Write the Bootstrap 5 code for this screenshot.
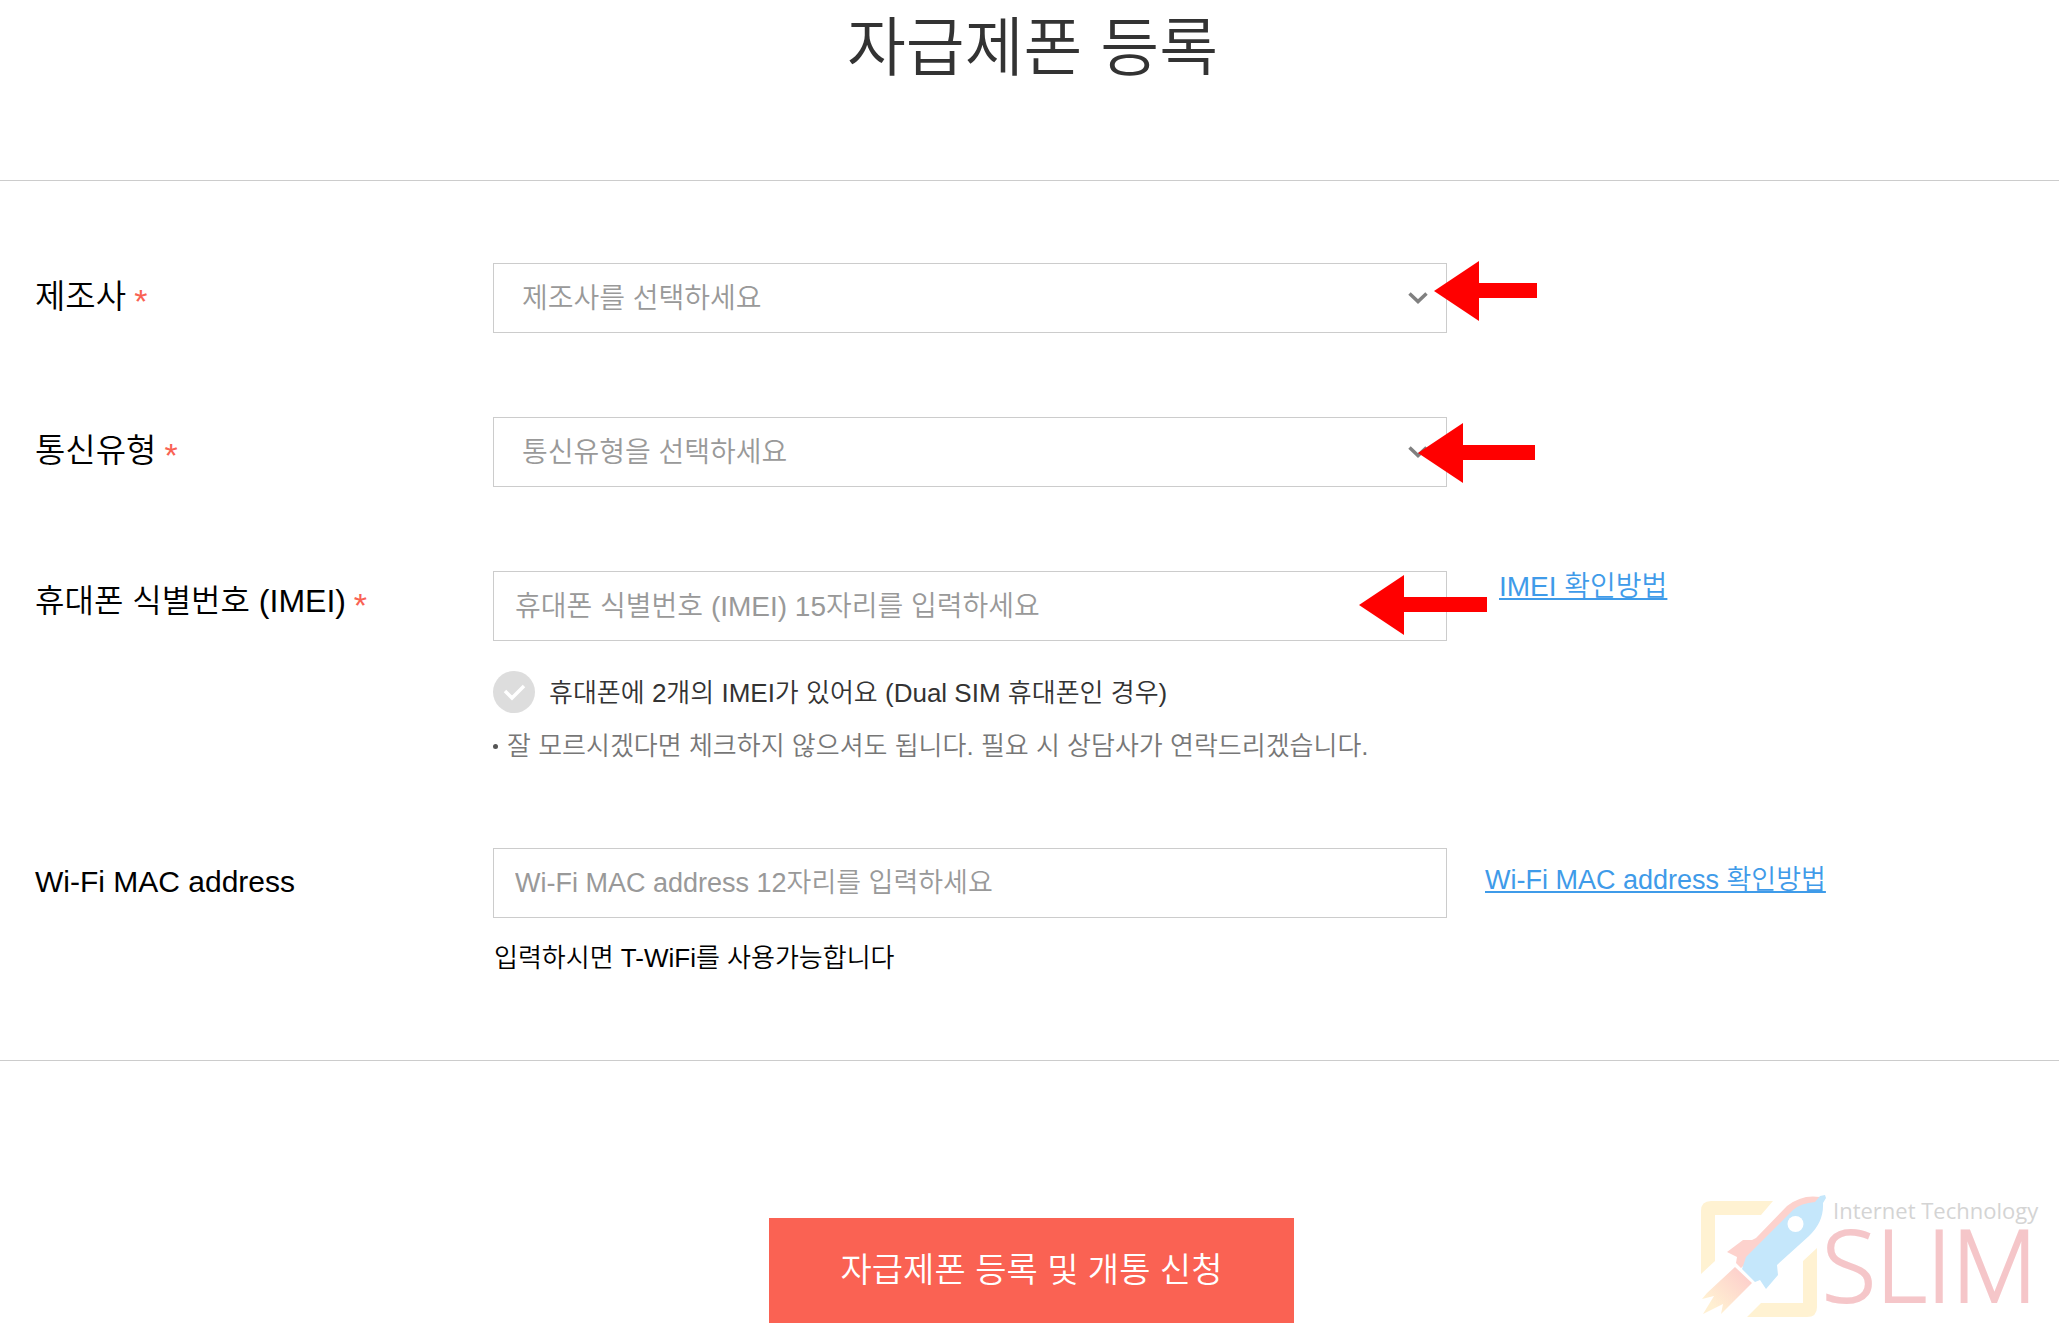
<!DOCTYPE html>
<html lang="ko">
<head>
<meta charset="utf-8">
<meta name="viewport" content="width=device-width, initial-scale=1">
<title>자급제폰 등록</title>
<link href="https://cdn.jsdelivr.net/npm/bootstrap@5.3.0/dist/css/bootstrap.min.css" rel="stylesheet">
<style>
  body { font-family: "Liberation Sans", "Noto Sans CJK KR", sans-serif; font-weight: 350; color: #000; background: #fff; }
  .page-title { font-size: 64px; line-height: 72px; font-weight: 350; color: #333; padding: 6px 0 102px 6px; font-family: "Noto Sans CJK KR", sans-serif; }
  .reg-form { border-top: 1px solid #ccc; border-bottom: 1px solid #ccc; padding: 82px 0 82px 35px; }
  .form-line { display: grid; grid-template-columns: 458fr 954fr 612fr; }
  .form-line + .form-line { margin-top: 84px; }
  .line-label { font-size: 33px; line-height: 68px; }
  .line-label.latin { font-size: 30px; }
  .line-label.lifted { font-size: 32px; line-height: 60px; }
  .req { color: #f96253; font-size: 34px; line-height: 34px; vertical-align: -5px; margin-left: -1px; }
  .reg-form .field { height: 70px; border: 1px solid #ccc; border-radius: 0; color: #999; font-size: 28px; font-weight: 350; line-height: 40px; padding: 2px 20px 0 21px; background-color: #fff; }
  .reg-form select.field { padding: 2px 60px 0 28px; background-image: url("data:image/svg+xml,%3Csvg xmlns='http://www.w3.org/2000/svg' viewBox='0 0 20 12'%3E%3Cpath d='M1.5 1.5 10 9.5l8.500-8' fill='none' stroke='%23808080' stroke-width='3.500'/%3E%3C/svg%3E"); background-size: 20px 12px; background-position: right 18px center; }
  .field::placeholder { color: #999; opacity: 1; }
  .reg-form .field.mac { font-size: 27px; padding-top: 0; }
  .pointer { position: absolute; height: 60px; fill: #f00; pointer-events: none; }
  .pointer.p1 { right: -90px; top: -2px; width: 103px; }
  .pointer.p2 { right: -88px; top: 6px; width: 117px; }
  .pointer.p3 { right: -40px; top: 4px; width: 128px; }
  .help-link { font-size: 28px; line-height: 32px; color: #3f9be9; text-decoration-thickness: 2px; text-underline-offset: 2px; text-decoration-skip-ink: none; }
  .help-link.mac { font-size: 27px; }
  .help-cell { padding-left: 52px; }
  .help-cell.mac { padding: 16px 0 0 38px; }
  .dual-row { margin-top: 30px; gap: 14px; font-size: 26px; line-height: 42px; color: #333; }
  .dual-row label { padding-top: 2px; line-height: 40px; }
  .dual-row .form-check-input { width: 42px; height: 42px; margin: 0; border: 0; border-radius: 50%; background: #ddd url("data:image/svg+xml,%3Csvg xmlns='http://www.w3.org/2000/svg' viewBox='0 0 42 42'%3E%3Cpath d='M12 20l7 7 12-12' fill='none' stroke='%23fff' stroke-width='3.500'/%3E%3C/svg%3E") center / 42px 42px; }
  .note-item { display: flex; align-items: center; gap: 9px; margin-top: 15px; font-size: 26px; line-height: 36px; color: #777; }
  .note-item::before { content: ""; flex: none; width: 5px; height: 5px; border-radius: 50%; background: #555; }
  .mac-note { font-size: 26px; line-height: 40px; margin: 20px 0 0 1px; }
  .action-area { padding: 157px 0 13px 4px; }
  .btn-apply { min-width: 525px; height: 105px; border: 0; border-radius: 0; font-size: 34px; line-height: 48px; font-weight: 350; color: #fff; background: #fa6253; padding: 0 12px 2px; }
  .btn-apply:hover { color: #fff; background: #e95546; }
  .brand-mark { position: absolute; right: 0; bottom: 0; width: 379px; height: 165px; font-family: "Open Sans", sans-serif; }
</style>
<script src="https://cdn.jsdelivr.net/npm/bootstrap@5.3.0/dist/js/bootstrap.bundle.min.js"></script>
</head>
<body>
<header><h1 class="page-title text-center m-0">자급제폰 등록</h1></header>
<main>
<form>
  <div class="reg-form">
    <div class="form-line">
      <label class="line-label" for="maker">제조사 <span class="req">*</span></label>
      <div class="position-relative">
        <select class="form-select field" id="maker"><option>제조사를 선택하세요</option></select>
        <svg class="pointer p1" viewBox="0 0 103 60" aria-hidden="true"><path d="M0 30 45 0v22h58v15H45v23z"/></svg>
      </div>
    </div>
    <div class="form-line">
      <label class="line-label" for="network">통신유형 <span class="req">*</span></label>
      <div class="position-relative">
        <select class="form-select field" id="network"><option>통신유형을 선택하세요</option></select>
        <svg class="pointer p2" viewBox="0 0 117 60" aria-hidden="true"><path d="M0 30 45 0v22h72v15H45v23z"/></svg>
      </div>
    </div>
    <div class="form-line">
      <label class="line-label lifted" for="imei">휴대폰 식별번호 (IMEI) <span class="req">*</span></label>
      <div class="position-relative">
        <input class="form-control field" id="imei" type="text" placeholder="휴대폰 식별번호 (IMEI) 15자리를 입력하세요">
        <svg class="pointer p3" viewBox="0 0 128 60" aria-hidden="true"><path d="M0 30 45 0v22h83v15H45v23z"/></svg>
        <div class="dual-row d-flex align-items-center">
          <input class="form-check-input" type="checkbox" id="dual">
          <label for="dual">휴대폰에 2개의 IMEI가 있어요 (Dual SIM 휴대폰인 경우)</label>
        </div>
        <div class="note-item text-nowrap">잘 모르시겠다면 체크하지 않으셔도 됩니다. 필요 시 상담사가 연락드리겠습니다.</div>
      </div>
      <div class="help-cell"><a class="help-link" href="#">IMEI 확인방법</a></div>
    </div>
    <div class="form-line">
      <label class="line-label latin" for="mac">Wi-Fi MAC address</label>
      <div>
        <input class="form-control field mac" id="mac" type="text" placeholder="Wi-Fi MAC address 12자리를 입력하세요">
        <p class="mac-note">입력하시면 T-WiFi를 사용가능합니다</p>
      </div>
      <div class="help-cell mac"><a class="help-link mac" href="#">Wi-Fi MAC address 확인방법</a></div>
    </div>
  </div>
  <div class="action-area position-relative text-center">
    <button class="btn btn-apply" type="submit">자급제폰 등록 및 개통 신청</button>
    <svg class="brand-mark" viewBox="0 0 379 165" role="img" aria-label="Internet Technology SLIM">
      <defs>
        <linearGradient id="flame" x1="1" y1="0" x2="0" y2="1"><stop offset=".15" stop-color="#fdd0cc"/><stop offset=".8" stop-color="#fff0d2"/></linearGradient>
      </defs>
      <path fill="#fff2d2" d="M21 103V40q0-10 10-10h62L81 44H35v46zM137 77v59q0 10-10 10H67l14-14h42V90z"/>
      <path fill="#fdd2cd" d="M140 26q-18-3-33 9L76 67l-4 2H63L47 81l10 5-1 6 5 5 10-9 45-44q8-12 22-12z"/>
      <path fill="#c5e7fb" d="M145 24l-5 1-5 6q-14 1-22 8L66 86l-4 12 13 13 5-2 6 9 12-14-1-10 32-29q15-14 14-33l3-5z"/>
      <circle cx="115.500" cy="53" r="8" fill="#fff"/>
      <path fill="url(#flame)" d="M55 96l17 16-31 31 2-10-20 10 11-18-12 3 5-6z"/>
      <text x="153" y="48" font-size="22" font-weight="400" fill="#d4d4d4">Internet Technology</text>
      <text x="142" y="131" font-size="99" font-weight="300" fill="#f5c6c9" stroke="#f5c6c9" stroke-width="2">SLIM</text>
    </svg>
  </div>
</form>
</main>
</body>
</html>
